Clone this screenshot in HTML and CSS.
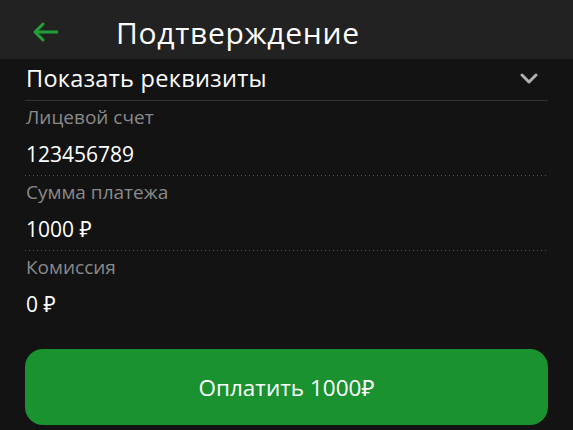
FILE: index.html
```html
<!DOCTYPE html>
<html lang="ru">
<head>
<meta charset="utf-8">
<link rel="stylesheet" href="styles.css">
</head>
<body>
<header class="topbar">
  <svg class="back" width="26" height="20" viewBox="0 0 26 20" fill="none">
    <path d="M25 10H3M11 2L3 10l8 8" stroke="#21a038" stroke-width="3" stroke-linecap="round" stroke-linejoin="round"/>
  </svg>
  <h1 class="title">Подтверждение</h1>
</header>
<main class="content">
  <div class="toggle">
    <span class="toggle-text">Показать реквизиты</span>
    <svg class="chev" width="18" height="11" viewBox="0 0 18 11" fill="none">
      <path d="M2 2l7 7 7-7" stroke="#b0b0b0" stroke-width="3" stroke-linecap="round" stroke-linejoin="round"/>
    </svg>
  </div>
  <div class="field dotted">
    <div class="label">Лицевой счет</div>
    <div class="value">123456789</div>
  </div>
  <div class="field dotted">
    <div class="label">Сумма платежа</div>
    <div class="value">1000 ₽</div>
  </div>
  <div class="field">
    <div class="label">Комиссия</div>
    <div class="value">0 ₽</div>
  </div>
  <button class="pay">Оплатить 1000₽</button>
</main>
</body>
</html>
```
FILE: styles.css
```css
* { box-sizing: border-box; }
html, body { margin: 0; padding: 0; }
body {
  background: #131313;
  color: #fff;
  font-family: "Open Sans", "Noto Sans", sans-serif;
  width: 573px;
  height: 430px;
  overflow: hidden;
}
.topbar {
  height: 59px;
  background: #222222;
  display: flex;
  align-items: flex-start;
  padding-left: 32px;
}
.back { display: block; margin-top: 22px; }
.title {
  margin: 6px 0 0 58px;
  font-size: 30px;
  font-weight: 400;
  line-height: 53px;
  letter-spacing: 0.7px;
}
.content {
  padding: 0 25px;
}
.toggle {
  height: 42px;
  display: flex;
  align-items: center;
  justify-content: space-between;
  border-bottom: 1px solid #333;
  padding-bottom: 4px;
}
.toggle-text {
  font-size: 23.5px;
  line-height: 30px;
  letter-spacing: 0.3px;
  padding-left: 1px;
}
.chev { margin-right: 10px; margin-top: 2px; }
.field {
  padding-top: 3px;
  padding-bottom: 7px;
}
.dotted {
  background-image: linear-gradient(to right, #555 1px, transparent 1px);
  background-size: 4px 1px;
  background-repeat: repeat-x;
  background-position: left bottom;
}
.label {
  font-size: 19px;
  line-height: 26px;
  color: #8a8a8a;
  padding-left: 1px;
}
.value {
  font-size: 21px;
  line-height: 30px;
  margin-top: 9px;
  padding-left: 1px;
}
.pay {
  display: block;
  width: 523px;
  height: 76px;
  margin-top: 23px;
  border: 0;
  border-radius: 18px;
  background: #1a922f;
  color: #fff;
  font-family: "Open Sans", "Noto Sans", sans-serif;
  font-size: 22.5px;
}
```
